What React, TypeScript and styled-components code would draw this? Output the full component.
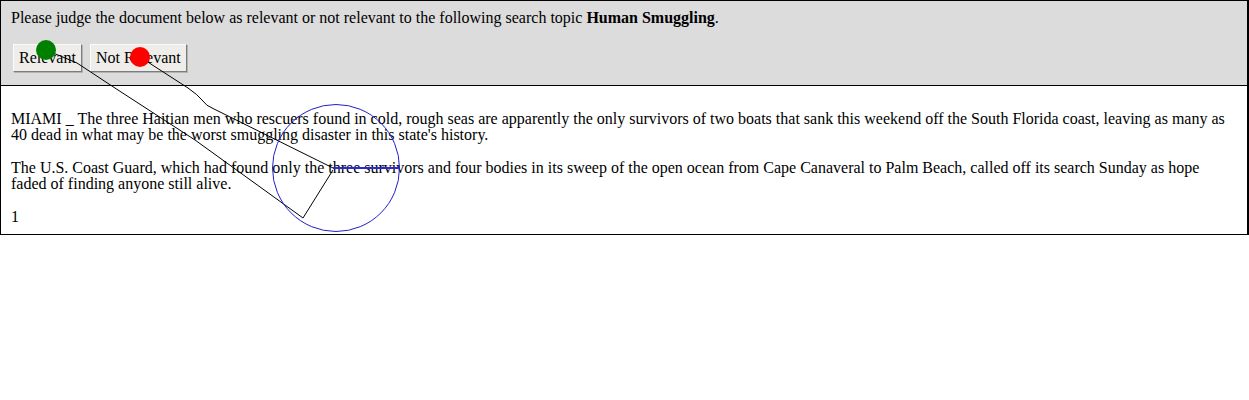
import React from "react";
import styled, { createGlobalStyle } from "styled-components";

const GlobalStyle = createGlobalStyle`
  html, body {
    margin: 0;
    padding: 0;
    background: #ffffff;
  }
  body {
    font-family: "Liberation Serif", "Times New Roman", serif;
    font-size: 16px;
    color: #000;
  }
`;

const Page = styled.div`
  position: relative;
  width: 1249px;
  height: 400px;
`;

const Frame = styled.div`
  box-sizing: border-box;
  width: 1249px;
  border: 1px solid #000;
  border-right-width: 2px;
`;

const Header = styled.div`
  background: #dcdcdc;
  padding: 9px 10px 13px 10px;
  border-bottom: 1px solid #000;
`;

const Prompt = styled.p`
  margin: 0 0 17px 0;
  line-height: 16.5px;
`;

const ButtonRow = styled.div`
  display: flex;
  gap: 8px;
  padding-left: 2px;
`;

const JudgeButton = styled.button`
  font-family: "Liberation Serif", "Times New Roman", serif;
  font-size: 16px;
  color: #000;
  background: #efedea;
  height: 28px;
  padding: 0 5px;
  border: 1px solid;
  border-color: #fbfbfb #7c7c7c #7c7c7c #fbfbfb;
  box-shadow: 1px 1px 0 #b4b4b4;
  border-radius: 0;
  line-height: 18px;
`;

const Body = styled.div`
  padding: 25px 10px 9px 10px;
`;

const Para = styled.p`
  margin: 0 0 16px 0;
  line-height: 16.5px;
  &:last-child {
    margin-bottom: 0;
  }
`;

const Overlay = styled.svg`
  position: absolute;
  left: 0;
  top: 0;
  pointer-events: none;
`;

export default function App() {
  return (
    <>
      <GlobalStyle />
      <Page>
        <Frame>
          <Header>
            <Prompt>
              Please judge the document below as relevant or not relevant to the following search topic{" "}
              <b>Human Smuggling</b>.
            </Prompt>
            <ButtonRow>
              <JudgeButton>Relevant</JudgeButton>
              <JudgeButton>Not Relevant</JudgeButton>
            </ButtonRow>
          </Header>
          <Body>
            <Para>
              MIAMI _ The three Haitian men who rescuers found in cold, rough seas are apparently the only survivors of two boats that sank this weekend off the South Florida coast, leaving as many as 40 dead in what may be the worst smuggling disaster in this state's history.
            </Para>
            <Para>
              The U.S. Coast Guard, which had found only the three survivors and four bodies in its sweep of the open ocean from Cape Canaveral to Palm Beach, called off its search Sunday as hope faded of finding anyone still alive.
            </Para>
            <Para>1</Para>
          </Body>
        </Frame>
        <Overlay width="1249" height="400" viewBox="0 0 1249 400">
          <path
            d="M46 50 L77 63 L118 90 L195 140 L303 218 L333 170"
            fill="none"
            stroke="#000"
            strokeWidth="1"
          />
          <path
            d="M140 57 L188 88 Q198 95 202 100 Q206 106 214 109 L333 168"
            fill="none"
            stroke="#000"
            strokeWidth="1"
          />
          <line x1="333" y1="168" x2="400" y2="168" stroke="#2a2ad0" strokeWidth="2" />
          <circle cx="336" cy="168" r="63.5" fill="none" stroke="#2020c8" strokeWidth="1" />
          <circle cx="46" cy="50" r="10" fill="#008000" />
          <circle cx="140" cy="57" r="10" fill="#ff0000" />
        </Overlay>
      </Page>
    </>
  );
}
